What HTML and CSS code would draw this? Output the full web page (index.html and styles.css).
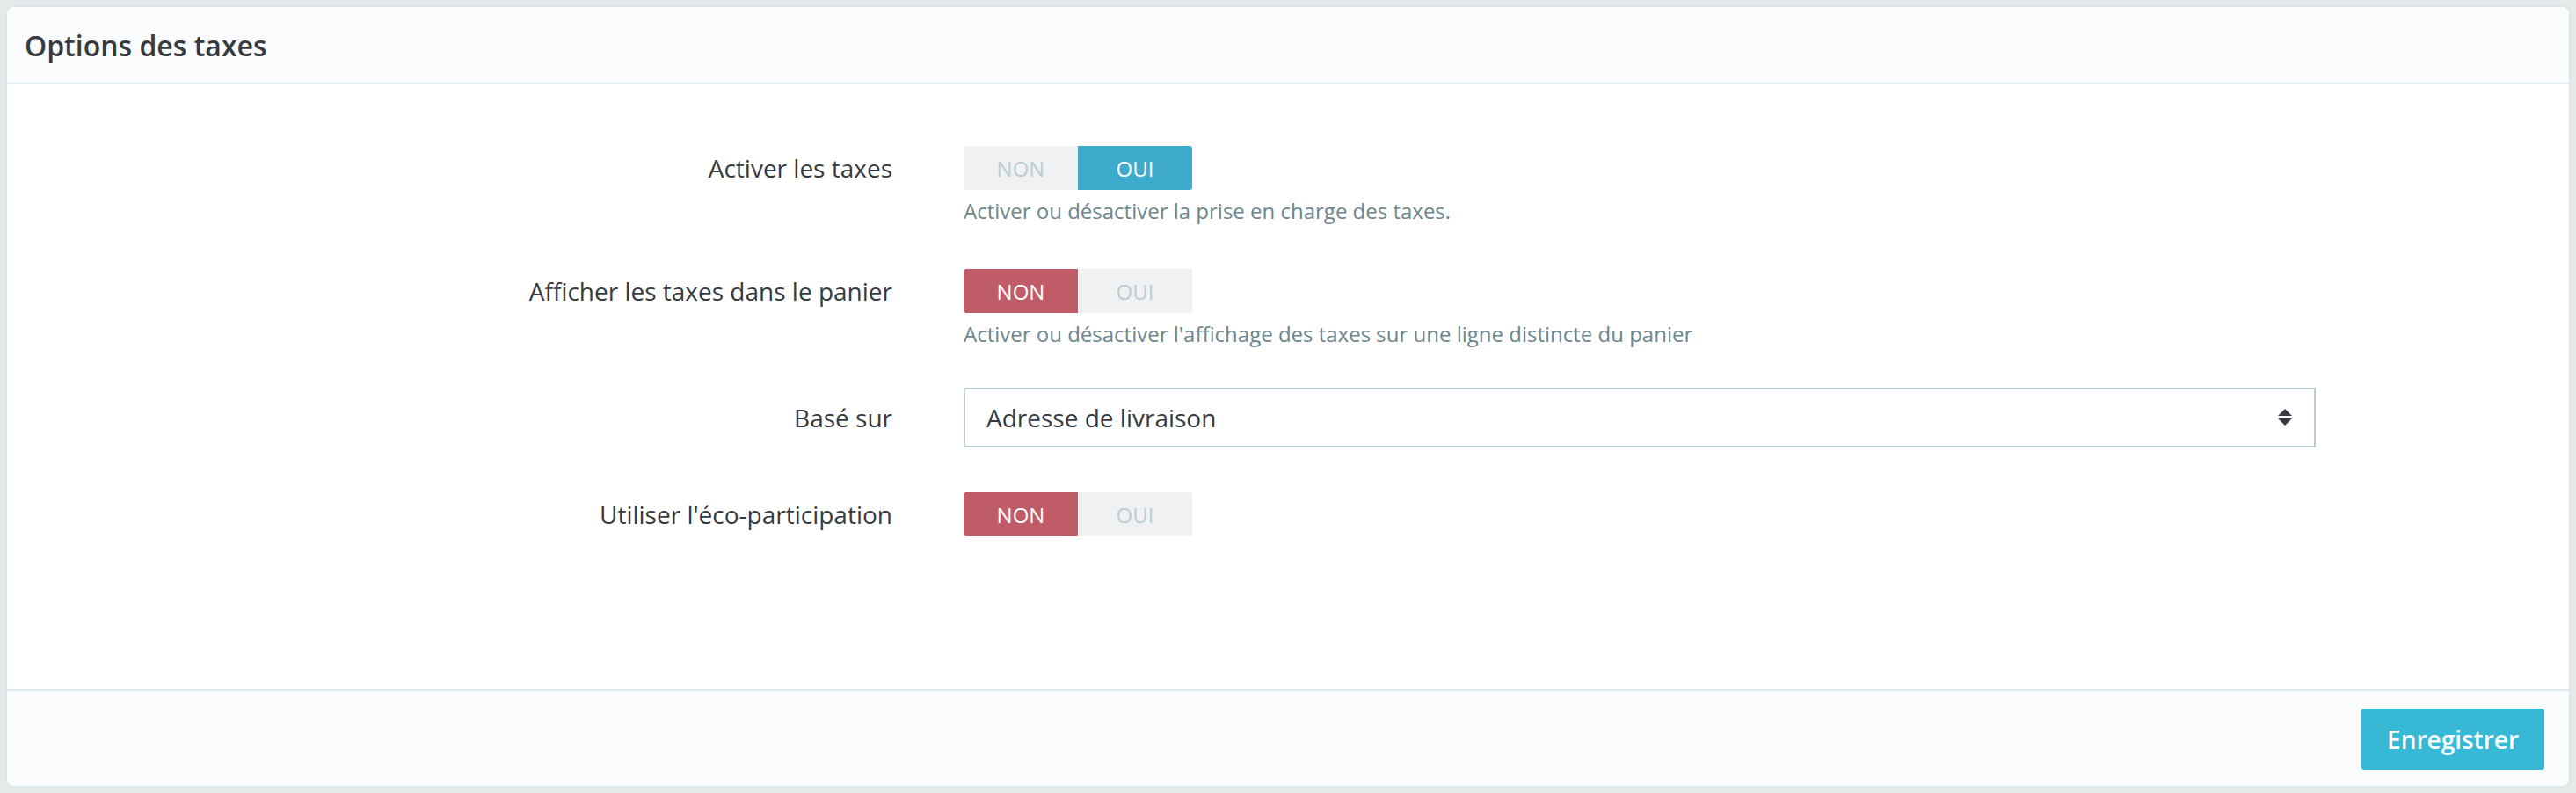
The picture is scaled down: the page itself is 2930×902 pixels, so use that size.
FILE: index.html
```html
<!DOCTYPE html>
<html lang="fr">
<head>
<meta charset="utf-8">
<title>Options des taxes</title>
<link rel="stylesheet" href="styles.css">
</head>
<body>
<div class="card">
  <div class="card-header">
    <h3 class="card-title">Options des taxes</h3>
  </div>
  <div class="card-body">
    <div class="form-row row-1">
      <div class="form-label">Activer les taxes</div>
      <div class="form-control-col">
        <div class="switch">
          <span class="switch-opt">NON</span>
          <span class="switch-opt on-yes">OUI</span>
        </div>
        <div class="help">Activer ou désactiver la prise en charge des taxes.</div>
      </div>
    </div>
    <div class="form-row row-2">
      <div class="form-label">Afficher les taxes dans le panier</div>
      <div class="form-control-col">
        <div class="switch">
          <span class="switch-opt on-no">NON</span>
          <span class="switch-opt">OUI</span>
        </div>
        <div class="help">Activer ou désactiver l'affichage des taxes sur une ligne distincte du panier</div>
      </div>
    </div>
    <div class="form-row row-3">
      <div class="form-label tall">Basé sur</div>
      <div class="form-control-col">
        <div class="select">
          <span class="select-value">Adresse de livraison</span>
          <svg class="select-arrow" width="16" height="20" viewBox="0 0 16 20" aria-hidden="true">
            <polygon points="8,0 16,8 0,8" fill="#363a41"/>
            <polygon points="0,11 16,11 8,19" fill="#363a41"/>
          </svg>
        </div>
      </div>
    </div>
    <div class="form-row row-4">
      <div class="form-label">Utiliser l'éco-participation</div>
      <div class="form-control-col">
        <div class="switch">
          <span class="switch-opt on-no">NON</span>
          <span class="switch-opt">OUI</span>
        </div>
      </div>
    </div>
  </div>
  <div class="card-footer">
    <button class="btn-primary" type="button">Enregistrer</button>
  </div>
</div>
</body>
</html>
```

FILE: styles.css
```css
html, body {
  margin: 0;
  padding: 0;
}

body {
  background: #e6e9e9;
  padding: 6px;
  font-family: "Open Sans", "Noto Sans", sans-serif;
  color: #363a41;
}

.card {
  background: #fff;
  border: 2px solid #dbe6e9;
  border-radius: 10px;
  overflow: hidden;
}

.card-header {
  background: #fafbfc;
  height: 86px;
  border-bottom: 2px solid #dbe6e9;
  display: flex;
  align-items: center;
  padding: 0 20px;
}

.card-title {
  margin: 0;
  font-size: 32px;
  font-weight: 600;
  color: #363a41;
}

.card-body {
  padding: 70px 0 174px 0;
}

.form-row {
  display: grid;
  grid-template-columns: 1007px 1538px;
  column-gap: 81px;
  align-items: start;
}

.row-2 { margin-top: 48px; }
.row-3 { margin-top: 43px; }
.row-4 { margin-top: 51px; }

.form-label {
  text-align: right;
  font-size: 28px;
  line-height: 50px;
  height: 50px;
  color: #363a41;
}

.form-label.tall {
  line-height: 68px;
  height: 68px;
}

.form-control-col {
  display: flex;
  flex-direction: column;
  align-items: flex-start;
}

.switch {
  display: flex;
  height: 50px;
  border-radius: 3px;
  overflow: hidden;
}

.switch-opt {
  width: 130px;
  height: 50px;
  display: flex;
  align-items: center;
  justify-content: center;
  background: #eff1f2;
  color: #bbcdd2;
  font-size: 24px;
}

.switch-opt.on-yes {
  background: #3eaacc;
  color: #fff;
}

.switch-opt.on-no {
  background: #c05c67;
  color: #fff;
}

.help {
  margin-top: 6px;
  font-size: 24px;
  line-height: 36px;
  color: #6c868e;
}

.select {
  box-sizing: border-box;
  width: 1538px;
  height: 68px;
  border: 2px solid #bbcdd2;
  display: flex;
  align-items: center;
  justify-content: space-between;
  padding: 0 25px 0 24px;
  background: #fff;
}

.select-value {
  font-size: 28px;
  color: #363a41;
}

.select-arrow {
  display: block;
}

.card-footer {
  background: #fafbfc;
  border-top: 2px solid #dbe6e9;
  height: 108px;
  display: flex;
  align-items: center;
  justify-content: flex-end;
  padding: 0 28px;
}

.btn-primary {
  font-family: "Open Sans", "Noto Sans", sans-serif;
  font-size: 28px;
  font-weight: 600;
  color: #fff;
  background: #37b8d5;
  border: 0;
  border-radius: 3px;
  width: 208px;
  height: 70px;
  padding: 0;
  margin-top: 2px;
}
```
